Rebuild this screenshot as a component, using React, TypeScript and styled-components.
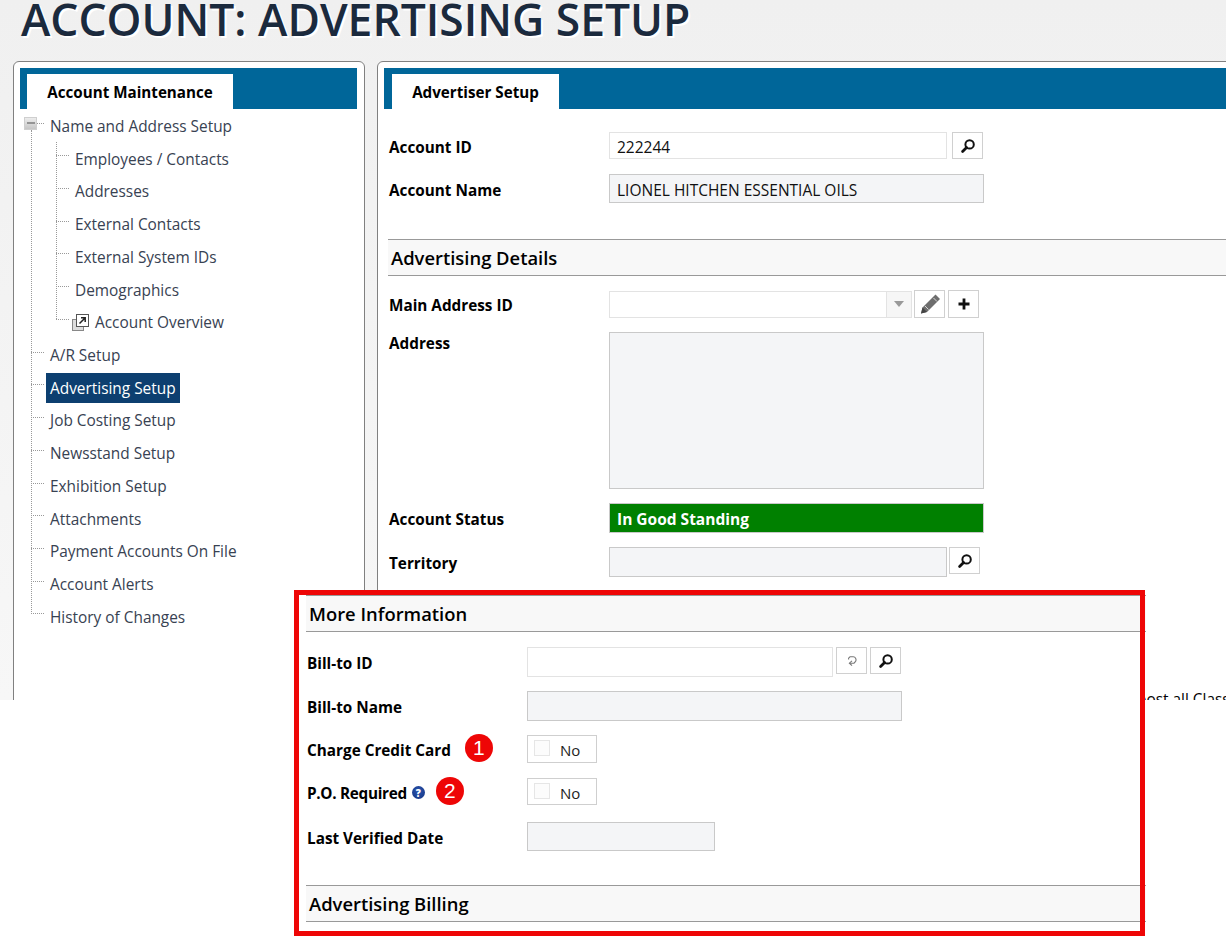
import React from 'react';
import styled, { createGlobalStyle } from 'styled-components';

const GlobalStyle = createGlobalStyle`
  * {
    box-sizing: border-box;
  }

  html,
  body {
    background: #fff;
    margin: 0;
    padding: 0;
  }

  body {
    color: #000;
    font-family: 'Open Sans', 'Noto Sans', sans-serif;
    font-size: 14px;
  }
`;

const Page = styled('div')`
  background: #fff;
  height: 936px;
  overflow: hidden;
  position: relative;
  width: 1226px;
`;

const Shell = styled('div')`
  background: linear-gradient(#f0f0f0, #f7f7f7);
  height: 700px;
  overflow: hidden;
`;

const Title = styled('h1')`
  color: #1b2a3d;
  font-size: 44.4px;
  font-weight: 600;
  height: 61px;
  line-height: 38px;
  margin: 0;
  padding-left: 21px;
  text-shadow: 2px 2px 0 #fff;
  white-space: nowrap;
`;

const Panels = styled('div')`
  display: flex;
  gap: 12px;
  padding-left: 13px;
`;

const Panel = styled('section')<{ $width: number }>`
  background: #fff;
  border: 1px solid #808080;
  border-radius: 6px;
  flex: 0 0 ${(p) => p.$width}px;
  height: 700px;
  padding: 6px;
`;

const TabBar = styled('div')<{ $width: number; $inset: number }>`
  background: #006699;
  height: 41px;
  padding: 6px 0 0 ${(p) => p.$inset}px;
  width: ${(p) => p.$width}px;
`;

const Tab = styled('div')<{ $width: number }>`
  background: #fff;
  font-size: 15.2px;
  font-weight: 700;
  height: 35px;
  line-height: 37px;
  text-align: center;
  white-space: nowrap;
  width: ${(p) => p.$width}px;
`;

const Tree = styled('ul')`
  list-style: none;
  margin: 0.6px 0 0;
  padding: 0;
  position: relative;

  &::before {
    border-left: 1px dotted #999;
    bottom: 19px;
    content: '';
    left: 11px;
    position: absolute;
    top: 20px;
  }
`;

const SubTree = styled('ul')`
  list-style: none;
  margin: 0;
  padding: 0;
  position: relative;

  &::before {
    border-left: 1px dotted #999;
    bottom: 20px;
    content: '';
    left: 36px;
    position: absolute;
    top: 0;
  }
`;

const TreeRow = styled('div')<{ $sub?: boolean }>`
  align-items: center;
  display: flex;
  gap: 1px;
  height: 32.72px;
  padding-left: ${(p) => (p.$sub ? 51 : 26)}px;
  position: relative;

  &::before {
    border-top: 1px dotted #999;
    content: '';
    left: ${(p) => (p.$sub ? 36 : 11)}px;
    position: absolute;
    top: 13px;
    width: 13px;
  }
`;

const TreeLabel = styled('span')<{ $selected?: boolean }>`
  background: ${(p) => (p.$selected ? '#0d3f70' : 'transparent')};
  color: ${(p) => (p.$selected ? '#fff' : '#384252')};
  font-size: 15.4px;
  line-height: 28px;
  padding: 2px 4px 0;
  white-space: nowrap;
`;

const Expander = styled('span')`
  align-items: center;
  background: linear-gradient(#ececec, #c6c6c6);
  border: 1px solid #cfcfcf;
  display: flex;
  height: 13px;
  justify-content: center;
  left: 4px;
  position: absolute;
  top: 7px;
  width: 13px;

  &::after {
    background: #949494;
    content: '';
    height: 2px;
    width: 8px;
  }
`;

const FormBody = styled('div')`
  padding-left: 5px;
`;

const Row = styled('div')<{ $mt: number; $top?: boolean }>`
  align-items: ${(p) => (p.$top ? 'flex-start' : 'center')};
  display: flex;
  margin-top: ${(p) => p.$mt}px;
`;

const LabelCell = styled('div')<{ $width: number; $top?: boolean }>`
  align-items: center;
  display: flex;
  flex: 0 0 ${(p) => p.$width}px;
  font-size: 15.3px;
  font-weight: 700;
  padding-top: ${(p) => (p.$top ? 1 : 2)}px;
  white-space: nowrap;
`;

const TightLabel = styled('span')`
  letter-spacing: -0.3px;
`;

const Field = styled('div')<{ $width: number; $height: number; $readOnly?: boolean; $tint?: string }>`
  align-items: center;
  background: ${(p) => p.$tint || (p.$readOnly ? '#f4f5f7' : '#fff')};
  border: 1px solid ${(p) => (p.$readOnly ? '#c9c9c9' : '#e3e3e3')};
  color: ${(p) => (p.$tint ? '#fff' : '#111')};
  display: flex;
  font-size: 15.5px;
  font-weight: ${(p) => (p.$tint ? 700 : 400)};
  height: ${(p) => p.$height}px;
  padding: 2px 0 0 7px;
  width: ${(p) => p.$width}px;
`;

const IconButton = styled('button')<{ $ml: number; $height?: number }>`
  align-items: center;
  align-self: flex-start;
  background: #fff;
  border: 1px solid #d0d0d0;
  display: flex;
  height: ${(p) => p.$height || 27}px;
  justify-content: center;
  margin-left: ${(p) => p.$ml}px;
  padding: 0;
  width: 31px;
`;

const ComboArrow = styled('span')`
  align-items: center;
  align-self: stretch;
  background: #f6f6f6;
  border-left: 1px solid #e3e3e3;
  display: flex;
  justify-content: center;
  margin: -2px 0 0 auto;
  width: 25px;

  &::after {
    border-left: 5px solid transparent;
    border-right: 5px solid transparent;
    border-top: 6px solid #999;
    content: '';
  }
`;

const SectionHead = styled('h2')<{ $mt: number; $inForm?: boolean; $flush?: boolean }>`
  background: #f8f8f8;
  border-bottom: 1px solid #999;
  border-top: 1px solid #999;
  font-size: 18.4px;
  font-weight: 600;
  height: 37px;
  line-height: 36px;
  margin: ${(p) => p.$mt}px ${(p) => (p.$flush ? '-1px' : '0')} 0 ${(p) => (p.$inForm ? '-1px' : '0')};
  padding-left: 3px;
`;

const Note = styled('p')`
  font-size: 15.4px;
  line-height: 20px;
  margin: 113px 0 0 748px;
  white-space: nowrap;
`;

const Callout = styled('div')`
  background: #fff;
  height: 346px;
  left: 294px;
  padding: 5px 0 0 12px;
  position: absolute;
  top: 590px;
  width: 851px;

  &::after {
    border: 5px solid #ee0606;
    content: '';
    inset: 0;
    pointer-events: none;
    position: absolute;
  }
`;

const CalloutRows = styled('div')`
  padding-left: 1px;
`;

const Badge = styled('span')<{ $ml: number; $lift: number }>`
  align-items: center;
  background: #ee0606;
  border-radius: 50%;
  color: #fff;
  display: flex;
  font-family: 'Liberation Sans', sans-serif;
  font-size: 21px;
  font-weight: 400;
  height: 28px;
  justify-content: center;
  letter-spacing: 0;
  margin: -${(p) => p.$lift}px 0 0 ${(p) => p.$ml}px;
  width: 28px;
`;

const HelpMark = styled('span')`
  align-items: center;
  background: radial-gradient(circle at 50% 40%, #2a55b0, #14327f);
  border-radius: 50%;
  color: #fff;
  display: flex;
  font-size: 10px;
  font-weight: 800;
  height: 13px;
  justify-content: center;
  margin-left: 5px;
  width: 13px;
`;

const Toggle = styled('div')<{ $height: number }>`
  align-items: flex-start;
  border: 1px solid #cfcfcf;
  display: flex;
  font-size: 15px;
  height: ${(p) => p.$height}px;
  padding: 4px 0 0 6px;
  width: 70px;
`;

const CheckBox = styled('span')`
  background: #fcfcfc;
  border: 1px solid #e6e6e6;
  height: 16px;
  width: 16px;
`;

const ToggleText = styled('span')`
  color: #222;
  line-height: 20px;
  margin: 0 0 0 10px;
`;

const SearchIcon = () => (
  <svg width="16" height="16" viewBox="0 0 16 16" fill="none">
    <circle cx="9.6" cy="6.4" r="4.2" stroke="#111" strokeWidth="2" />
    <path d="M6.6 9.6 2.6 13.6" stroke="#111" strokeWidth="2.8" strokeLinecap="round" />
  </svg>
);

const RefreshIcon = () => (
  <svg width="14" height="14" viewBox="0 0 14 14" fill="none" stroke="#777" strokeWidth="1.1">
    <path d="M3.6 5.5V4.2L5 2.8h3.2a3 3 0 0 1 2.4 4.6L9 9.2H4.6" />
    <path d="M7 6.9 4.4 9.2 7 11.6" />
  </svg>
);

const PencilIcon = () => (
  <svg width="22" height="22" viewBox="0 0 22 22">
    <path d="M16.5 1.5 21 6 8 19 2 20.5 3.5 14.5Z" fill="#6e6e6e" />
    <path d="M14.5 5 18 8.5M6 13l3.5 3.5" stroke="#d8d8d8" strokeWidth="1" />
    <path d="M3.5 14.5 8 19 2 20.5Z" fill="#444" />
  </svg>
);

const PlusIcon = () => (
  <svg width="12" height="12" viewBox="0 0 12 12">
    <path d="M0.5 6h11M6 0.5v11" stroke="#111" strokeWidth="2.8" />
  </svg>
);

const OverviewIcon = () => (
  <svg width="18" height="17" viewBox="0 0 18 17" fill="none" style={{ marginLeft: 1 }}>
    <rect x="0.5" y="5.5" width="11" height="11" fill="#ddd" stroke="#888" />
    <rect x="4.5" y="0.5" width="12" height="12" fill="#fff" stroke="#555" />
    <path d="M7.5 9.5 13 4M9 3.8h4.2V8" stroke="#222" strokeWidth="1.5" />
  </svg>
);

const childItems = [
  'Employees / Contacts',
  'Addresses',
  'External Contacts',
  'External System IDs',
  'Demographics',
];

const rootItems = [
  'A/R Setup',
  'Advertising Setup',
  'Job Costing Setup',
  'Newsstand Setup',
  'Exhibition Setup',
  'Attachments',
  'Payment Accounts On File',
  'Account Alerts',
  'History of Changes',
];

export default function App() {
  return (
    <Page>
      <GlobalStyle />
      <Shell>
        <Title>ACCOUNT: ADVERTISING SETUP</Title>
        <Panels>
          <Panel $width={352}>
            <TabBar $width={337} $inset={7}>
              <Tab $width={206}>Account Maintenance</Tab>
            </TabBar>
            <Tree>
              <li>
                <TreeRow>
                  <Expander />
                  <TreeLabel>Name and Address Setup</TreeLabel>
                </TreeRow>
                <SubTree>
                  {childItems.map((item) => (
                    <li key={item}>
                      <TreeRow $sub>
                        <TreeLabel>{item}</TreeLabel>
                      </TreeRow>
                    </li>
                  ))}
                  <li>
                    <TreeRow $sub>
                      <OverviewIcon />
                      <TreeLabel>Account Overview</TreeLabel>
                    </TreeRow>
                  </li>
                </SubTree>
              </li>
              {rootItems.map((item) => (
                <li key={item}>
                  <TreeRow>
                    <TreeLabel $selected={item === 'Advertising Setup'}>{item}</TreeLabel>
                  </TreeRow>
                </li>
              ))}
            </Tree>
          </Panel>
          <Panel $width={900}>
            <TabBar $width={900} $inset={8}>
              <Tab $width={167}>Advertiser Setup</Tab>
            </TabBar>
            <FormBody>
              <Row $mt={23}>
                <LabelCell $width={220}>Account ID</LabelCell>
                <Field $width={338} $height={27}>222244</Field>
                <IconButton $ml={5}><SearchIcon /></IconButton>
              </Row>
              <Row $mt={15}>
                <LabelCell $width={220}>Account Name</LabelCell>
                <Field $width={375} $height={29} $readOnly>LIONEL HITCHEN ESSENTIAL OILS</Field>
              </Row>
              <SectionHead $mt={36} $inForm>Advertising Details</SectionHead>
              <Row $mt={14}>
                <LabelCell $width={220}>Main Address ID</LabelCell>
                <Field $width={303} $height={27}><ComboArrow /></Field>
                <IconButton $ml={2} $height={28}><PencilIcon /></IconButton>
                <IconButton $ml={3} $height={28}><PlusIcon /></IconButton>
              </Row>
              <Row $mt={14} $top>
                <LabelCell $width={220} $top>Address</LabelCell>
                <Field $width={375} $height={157} $readOnly />
              </Row>
              <Row $mt={14}>
                <LabelCell $width={220}>Account Status</LabelCell>
                <Field $width={375} $height={30} $readOnly $tint="#008000">In Good Standing</Field>
              </Row>
              <Row $mt={14}>
                <LabelCell $width={220}>Territory</LabelCell>
                <Field $width={338} $height={30} $readOnly />
                <IconButton $ml={2}><SearchIcon /></IconButton>
              </Row>
              <Note>post all Classified</Note>
            </FormBody>
          </Panel>
        </Panels>
      </Shell>
      <Callout>
        <SectionHead $mt={0} $flush>More Information</SectionHead>
        <CalloutRows>
          <Row $mt={15}>
            <LabelCell $width={220}>Bill-to ID</LabelCell>
            <Field $width={306} $height={30} />
            <IconButton $ml={3}><RefreshIcon /></IconButton>
            <IconButton $ml={3}><SearchIcon /></IconButton>
          </Row>
          <Row $mt={14}>
            <LabelCell $width={220}>Bill-to Name</LabelCell>
            <Field $width={375} $height={30} $readOnly />
          </Row>
          <Row $mt={14}>
            <LabelCell $width={220}>
              Charge Credit Card
              <Badge $ml={14} $lift={4}>1</Badge>
            </LabelCell>
            <Toggle $height={28}>
              <CheckBox />
              <ToggleText>No</ToggleText>
            </Toggle>
          </Row>
          <Row $mt={15}>
            <LabelCell $width={220}>
              <TightLabel>P.O. Required</TightLabel>
              <HelpMark>?</HelpMark>
              <Badge $ml={11} $lift={3}>2</Badge>
            </LabelCell>
            <Toggle $height={27}>
              <CheckBox />
              <ToggleText>No</ToggleText>
            </Toggle>
          </Row>
          <Row $mt={17}>
            <LabelCell $width={220}>Last Verified Date</LabelCell>
            <Field $width={188} $height={29} $readOnly />
          </Row>
        </CalloutRows>
        <SectionHead $mt={34} $flush>Advertising Billing</SectionHead>
      </Callout>
    </Page>
  );
}
